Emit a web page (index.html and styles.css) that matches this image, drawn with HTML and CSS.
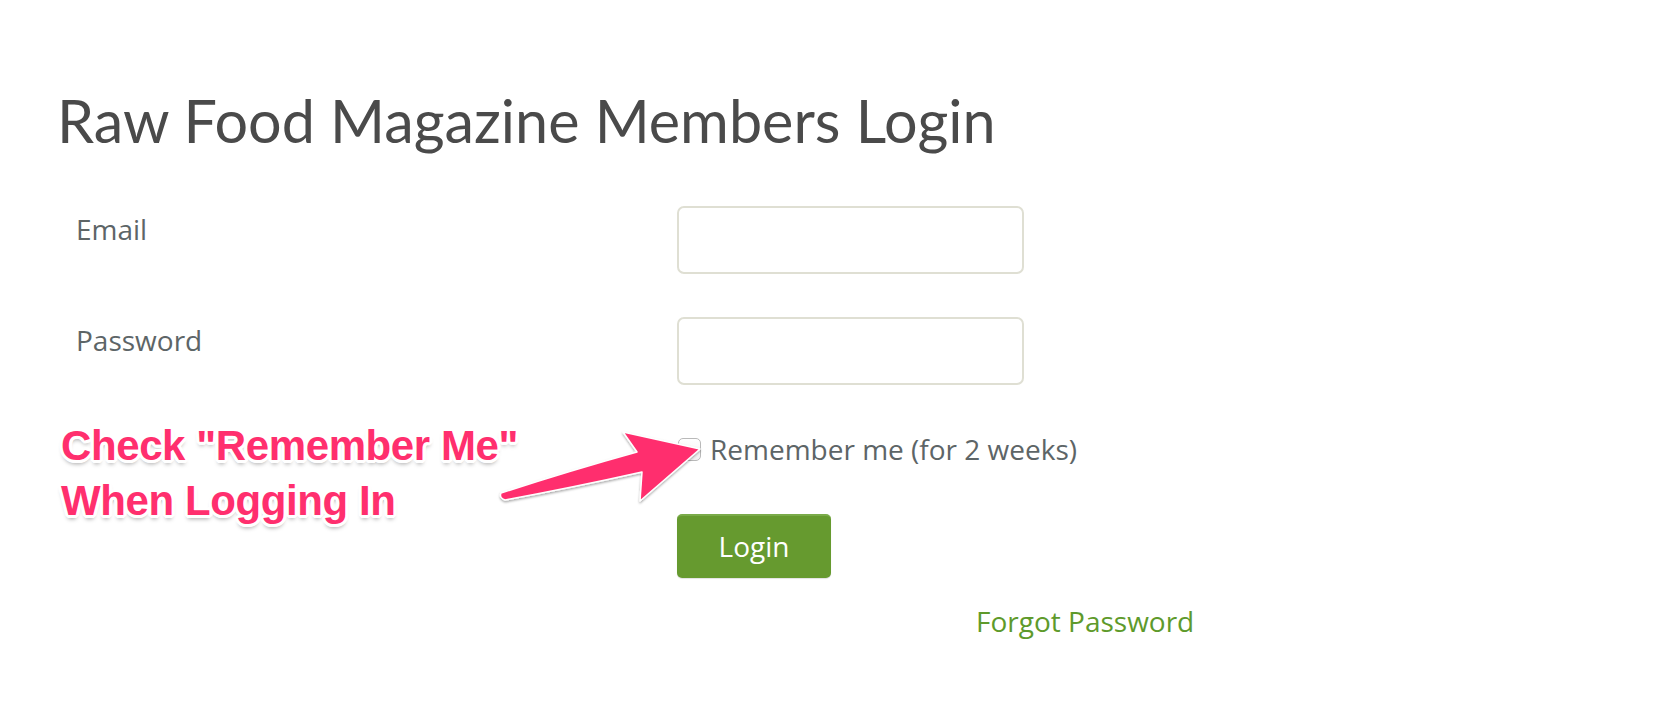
FILE: index.html
```html
<!DOCTYPE html>
<html lang="en">
<head>
<meta charset="utf-8">
<title>Raw Food Magazine Members Login</title>
<link rel="stylesheet" href="styles.css">
</head>
<body>
<main class="page">
  <h1 class="title">Raw Food Magazine Members Login</h1>
  <form class="login-form">
    <label class="label" for="email">Email</label>
    <input class="field" id="email" type="text">
    <label class="label" for="password">Password</label>
    <input class="field" id="password" type="password">
    <span></span>
    <label class="remember"><span class="checkbox"></span>Remember me (for 2 weeks)</label>
    <span></span>
    <div class="actions"><button class="btn" type="button">Login</button></div>
  </form>
  <div class="forgot"><a href="#">Forgot Password</a></div>

  <div class="annotation">
    <p class="note">Check "Remember Me"<br>When Logging In</p>
    <svg class="arrow" width="1666" height="722" viewBox="0 0 1666 722">
      <defs>
        <filter id="sh" x="-20%" y="-20%" width="140%" height="140%">
          <feDropShadow dx="0" dy="1.5" stdDeviation="1.2" flood-color="#000" flood-opacity="0.35"/>
        </filter>
      </defs>
      <path d="M 501 493 Q 572 470 637 452 L 623 432 L 700 449 L 640 501 L 642 472 Q 575 487 505 500 Q 499 498 501 493 Z" fill="#ff2f6e" stroke="#ffffff" stroke-width="1.5" stroke-linejoin="round" filter="url(#sh)"/>
    </svg>
  </div>
</main>
</body>
</html>
```

FILE: styles.css
```css
html, body {
  margin: 0;
  padding: 0;
  background: #ffffff;
}

.page {
  position: relative;
  width: 1666px;
  height: 722px;
  padding: 85px 0 0 57px;
  box-sizing: border-box;
  font-family: "Open Sans", "Liberation Sans", sans-serif;
  overflow: hidden;
}

.title {
  margin: 0;
  font-family: Lato, "Open Sans", sans-serif;
  font-weight: 400;
  font-size: 59.3px;
  line-height: 70px;
  color: #4a4a4a;
}

.login-form {
  display: grid;
  grid-template-columns: 601px 347px;
  row-gap: 43px;
  margin: 51px 0 0 19px;
  align-items: start;
}

.label {
  font-size: 28px;
  line-height: 40px;
  color: #5d6567;
  margin-top: 3px;
}

.field {
  box-sizing: border-box;
  width: 347px;
  height: 68px;
  margin: 0;
  border: 2px solid #dfdfd3;
  border-radius: 7px;
  background: #fff;
  outline: none;
  font: inherit;
}

.remember {
  display: flex;
  align-items: center;
  gap: 9px;
  margin-top: 1px;
  font-size: 28px;
  line-height: 40px;
  color: #5d6567;
  white-space: nowrap;
}

.checkbox {
  box-sizing: border-box;
  width: 23px;
  height: 23px;
  margin-left: 1px;
  border: 1.5px solid #b9b9b9;
  border-radius: 5px;
  background: linear-gradient(#ffffff, #f1f1f1);
  flex: none;
}

.actions {
  margin-top: 2px;
}

.btn {
  display: block;
  width: 154px;
  height: 64px;
  margin: 0;
  padding: 0 0 3px;
  border: none;
  border-top: 2px solid #7aab49;
  border-radius: 5px;
  background: #669a2f;
  color: #ffffff;
  font-family: "Open Sans", "Liberation Sans", sans-serif;
  font-size: 28px;
  line-height: 40px;
  box-shadow: 0 1px 1px rgba(0, 0, 0, 0.12);
}

.forgot {
  margin: 23px 0 0 919px;
  font-size: 28px;
  line-height: 40px;
}

.forgot a {
  color: #5e9a2b;
  text-decoration: none;
}

.annotation {
  position: absolute;
  left: 0;
  top: 0;
  width: 1666px;
  height: 722px;
  pointer-events: none;
}

.note {
  position: absolute;
  left: 61px;
  top: 418px;
  margin: 0;
  font-family: "Liberation Sans", Arial, sans-serif;
  font-weight: 700;
  font-size: 42px;
  line-height: 55px;
  letter-spacing: -0.4px;
  color: #ff2f6e;
  text-shadow:
    3px 0 0 #fff, -3px 0 0 #fff, 0 3px 0 #fff, 0 -3px 0 #fff,
    2px 2px 0 #fff, -2px 2px 0 #fff, 2px -2px 0 #fff, -2px -2px 0 #fff,
    3px 1px 0 #fff, -3px 1px 0 #fff, 3px -1px 0 #fff, -3px -1px 0 #fff,
    1px 3px 0 #fff, -1px 3px 0 #fff, 1px -3px 0 #fff, -1px -3px 0 #fff,
    0 4px 4px rgba(0, 0, 0, 0.35);
}

.arrow {
  position: absolute;
  left: 0;
  top: 0;
}
```
